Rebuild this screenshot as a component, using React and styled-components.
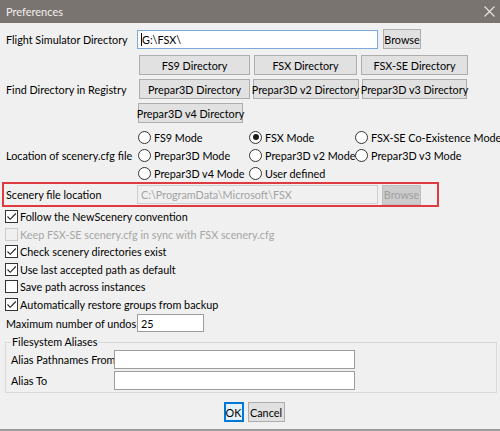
import React from 'react'
import styled, { createGlobalStyle } from 'styled-components'

const GlobalStyle = createGlobalStyle`
  html, body {
    margin: 0;
    padding: 0;
    background: #f0f0f0;
  }
  body {
    font-family: Lato, "Noto Sans", sans-serif;
    font-size: 10.8px;
    color: #000;
  }
  * { box-sizing: border-box; }
`

const registryButtons = [
  { text: 'FS9 Directory', w: 111 },
  { text: 'FSX Directory', w: 103 },
  { text: 'FSX-SE Directory', w: 107 },
  { text: 'Prepar3D Directory', w: 111 },
  { text: 'Prepar3D v2 Directory', w: 106 },
  { text: 'Prepar3D v3 Directory', w: 105 },
  { text: 'Prepar3D v4 Directory', w: 105, start: true },
]

const modes = [
  { text: 'FS9 Mode' },
  { text: 'FSX Mode', checked: true },
  { text: 'FSX-SE Co-Existence Mode' },
  { text: 'Prepar3D Mode' },
  { text: 'Prepar3D v2 Mode' },
  { text: 'Prepar3D v3 Mode' },
  { text: 'Prepar3D v4 Mode' },
  { text: 'User defined' },
]

const options = [
  { text: 'Follow the NewScenery convention', checked: true },
  { text: 'Keep FSX-SE scenery.cfg in sync with FSX scenery.cfg', disabled: true },
  { text: 'Check scenery directories exist', checked: true },
  { text: 'Use last accepted path as default', checked: true },
  { text: 'Save path across instances' },
  { text: 'Automatically restore groups from backup', checked: true },
]

export default function App() {
  return (
    <Window>
      <GlobalStyle />
      <TitleBar>
        <span>Preferences</span>
        <svg width="11" height="11" viewBox="0 0 11 11">
          <path d="M0.5 0.5 L10.5 10.5 M10.5 0.5 L0.5 10.5" stroke="#e8e6e5" strokeWidth="1.1" />
        </svg>
      </TitleBar>

      <Content>
        <Row>
          <Label>Flight Simulator Directory</Label>
          <TextBox focused w={241}><Caret />G:\FSX\</TextBox>
          <Button w={38} gap={5}>Browse</Button>
        </Row>

        <Row top={6}>
          <Label>Find Directory in Registry</Label>
          <ButtonGrid>
            {registryButtons.map((b) => (
              <Button key={b.text} w={b.w} start={b.start}>{b.text}</Button>
            ))}
          </ButtonGrid>
        </Row>

        <Row top={5}>
          <Label>Location of scenery.cfg file</Label>
          <RadioGrid>
            {modes.map((m) => (
              <RadioItem key={m.text}>
                <Radio checked={m.checked} />
                {m.text}
              </RadioItem>
            ))}
          </RadioGrid>
        </Row>

        <Highlight>
          <Label>Scenery file location</Label>
          <TextBox disabled w={241}>C:\ProgramData\Microsoft\FSX</TextBox>
          <Button disabled w={39} gap={4}>Browse</Button>
        </Highlight>

        <CheckList>
          {options.map((o) => (
            <CheckItem key={o.text} disabled={o.disabled}>
              <Box disabled={o.disabled}>
                {o.checked && (
                  <svg width="11" height="11" viewBox="0 0 11 11">
                    <path d="M1.5 5.5 L4.2 8.3 L9.8 2.5" fill="none" stroke="#222" strokeWidth="1.1" />
                  </svg>
                )}
              </Box>
              {o.text}
            </CheckItem>
          ))}
        </CheckList>

        <Row top={1}>
          <Label>Maximum number of undos</Label>
          <TextBox w={67} h={18}>25</TextBox>
        </Row>

        <Group>
          <Legend>Filesystem Aliases</Legend>
          <AliasRow>
            <AliasLabel>Alias Pathnames From</AliasLabel>
            <TextBox w={241} />
          </AliasRow>
          <AliasRow>
            <AliasLabel>Alias To</AliasLabel>
            <TextBox w={241} />
          </AliasRow>
        </Group>

        <Footer>
          <Button primary w={20}>OK</Button>
          <Button w={37}>Cancel</Button>
        </Footer>
      </Content>
    </Window>
  )
}

const Window = styled.div`
  width: 500px;
  height: 431px;
  display: flex;
  flex-direction: column;
  background: #f0f0f0;
  border-bottom: 2px solid #9c9c9c;
  overflow: hidden;
`

const TitleBar = styled.div`
  height: 23px;
  flex: none;
  display: flex;
  align-items: center;
  justify-content: space-between;
  padding: 0 5px 0 6px;
  background: #7a7471;
  color: #f1efee;
  font-size: 11px;
`

const Content = styled.div`
  flex: 1;
  display: flex;
  flex-direction: column;
  padding: 6px 0 0 6px;
`

const Row = styled.div`
  display: flex;
  align-items: center;
  margin-top: ${(p) => p.top || 0}px;
`

const Label = styled.div`
  width: ${(p) => p.w || 131}px;
  flex: none;
  white-space: nowrap;
`

const TextBox = styled.div`
  width: ${(p) => p.w}px;
  height: ${(p) => p.h || 19}px;
  flex: none;
  display: flex;
  align-items: center;
  padding: 0 3px;
  white-space: nowrap;
  background: ${(p) => (p.disabled ? '#f0f0f0' : '#fff')};
  color: ${(p) => (p.disabled ? '#a3a3a3' : '#000')};
  border: 1px solid ${(p) => (p.focused ? '#7aa9dc' : p.disabled ? '#cfcfcf' : '#9d9d9d')};
`

const Caret = styled.span`
  width: 1px;
  height: 13px;
  background: #000;
`

const Button = styled.div`
  width: ${(p) => p.w}px;
  height: 20px;
  flex: none;
  display: flex;
  align-items: center;
  justify-content: center;
  white-space: nowrap;
  margin-left: ${(p) => p.gap || 0}px;
  justify-self: ${(p) => (p.start ? 'start' : 'center')};
  background: ${(p) => (p.disabled ? '#cccccc' : p.primary ? '#e5f1fb' : '#e1e1e1')};
  color: ${(p) => (p.disabled ? '#a0a0a0' : '#000')};
  border: 1px solid ${(p) => (p.disabled ? '#bfbfbf' : p.primary ? '#0078d7' : '#adadad')};
  box-shadow: ${(p) => (p.primary ? 'inset 0 0 0 1px #0078d7' : 'none')};
`

const ButtonGrid = styled.div`
  display: grid;
  grid-template-columns: 113px 109px 109px;
  row-gap: 4px;
  margin-left: 1px;
`

const RadioGrid = styled.div`
  display: grid;
  grid-template-columns: 111px 106px auto;
  grid-auto-rows: 18px;
  margin-left: 1px;
`

const RadioItem = styled.div`
  display: flex;
  align-items: center;
  gap: 3px;
  white-space: nowrap;
`

const Radio = styled.span`
  width: 13px;
  height: 13px;
  flex: none;
  border-radius: 50%;
  border: 1px solid #333;
  background: #fff;
  display: flex;
  align-items: center;
  justify-content: center;
  &::after {
    content: '';
    width: 6px;
    height: 6px;
    border-radius: 50%;
    background: ${(p) => (p.checked ? '#1a1a1a' : 'transparent')};
  }
`

const Highlight = styled.div`
  display: flex;
  align-items: center;
  width: 437px;
  height: 25px;
  margin: 0 0 0 -4px;
  padding-left: 2px;
  border: 2px solid #df3a40;
`

const CheckList = styled.div`
  display: flex;
  flex-direction: column;
  margin-top: 1px;
`

const CheckItem = styled.div`
  height: 17.5px;
  display: flex;
  align-items: center;
  gap: 2px;
  margin-left: -1px;
  white-space: nowrap;
  color: ${(p) => (p.disabled ? '#a6a6a6' : '#000')};
`

const Box = styled.span`
  width: 13px;
  height: 13px;
  flex: none;
  display: flex;
  align-items: center;
  justify-content: center;
  background: ${(p) => (p.disabled ? 'transparent' : '#fff')};
  border: 1px solid ${(p) => (p.disabled ? '#cccccc' : '#333')};
`

const Group = styled.fieldset`
  margin: 4px 3px 0 -1px;
  padding: 0 5px 2px 5px;
  border: 1px solid #d9d9d9;
  min-width: 0;
`

const Legend = styled.legend`
  padding: 0 1px;
  margin-left: 0;
  line-height: 12px;
`

const AliasRow = styled.div`
  display: flex;
  align-items: center;
  height: 20px;
  margin-top: 1px;
`

const AliasLabel = styled.div`
  width: 103px;
  flex: none;
  white-space: nowrap;
`

const Footer = styled.div`
  display: flex;
  justify-content: center;
  gap: 4px;
  margin-top: 9px;
  padding-left: 2px;
`
